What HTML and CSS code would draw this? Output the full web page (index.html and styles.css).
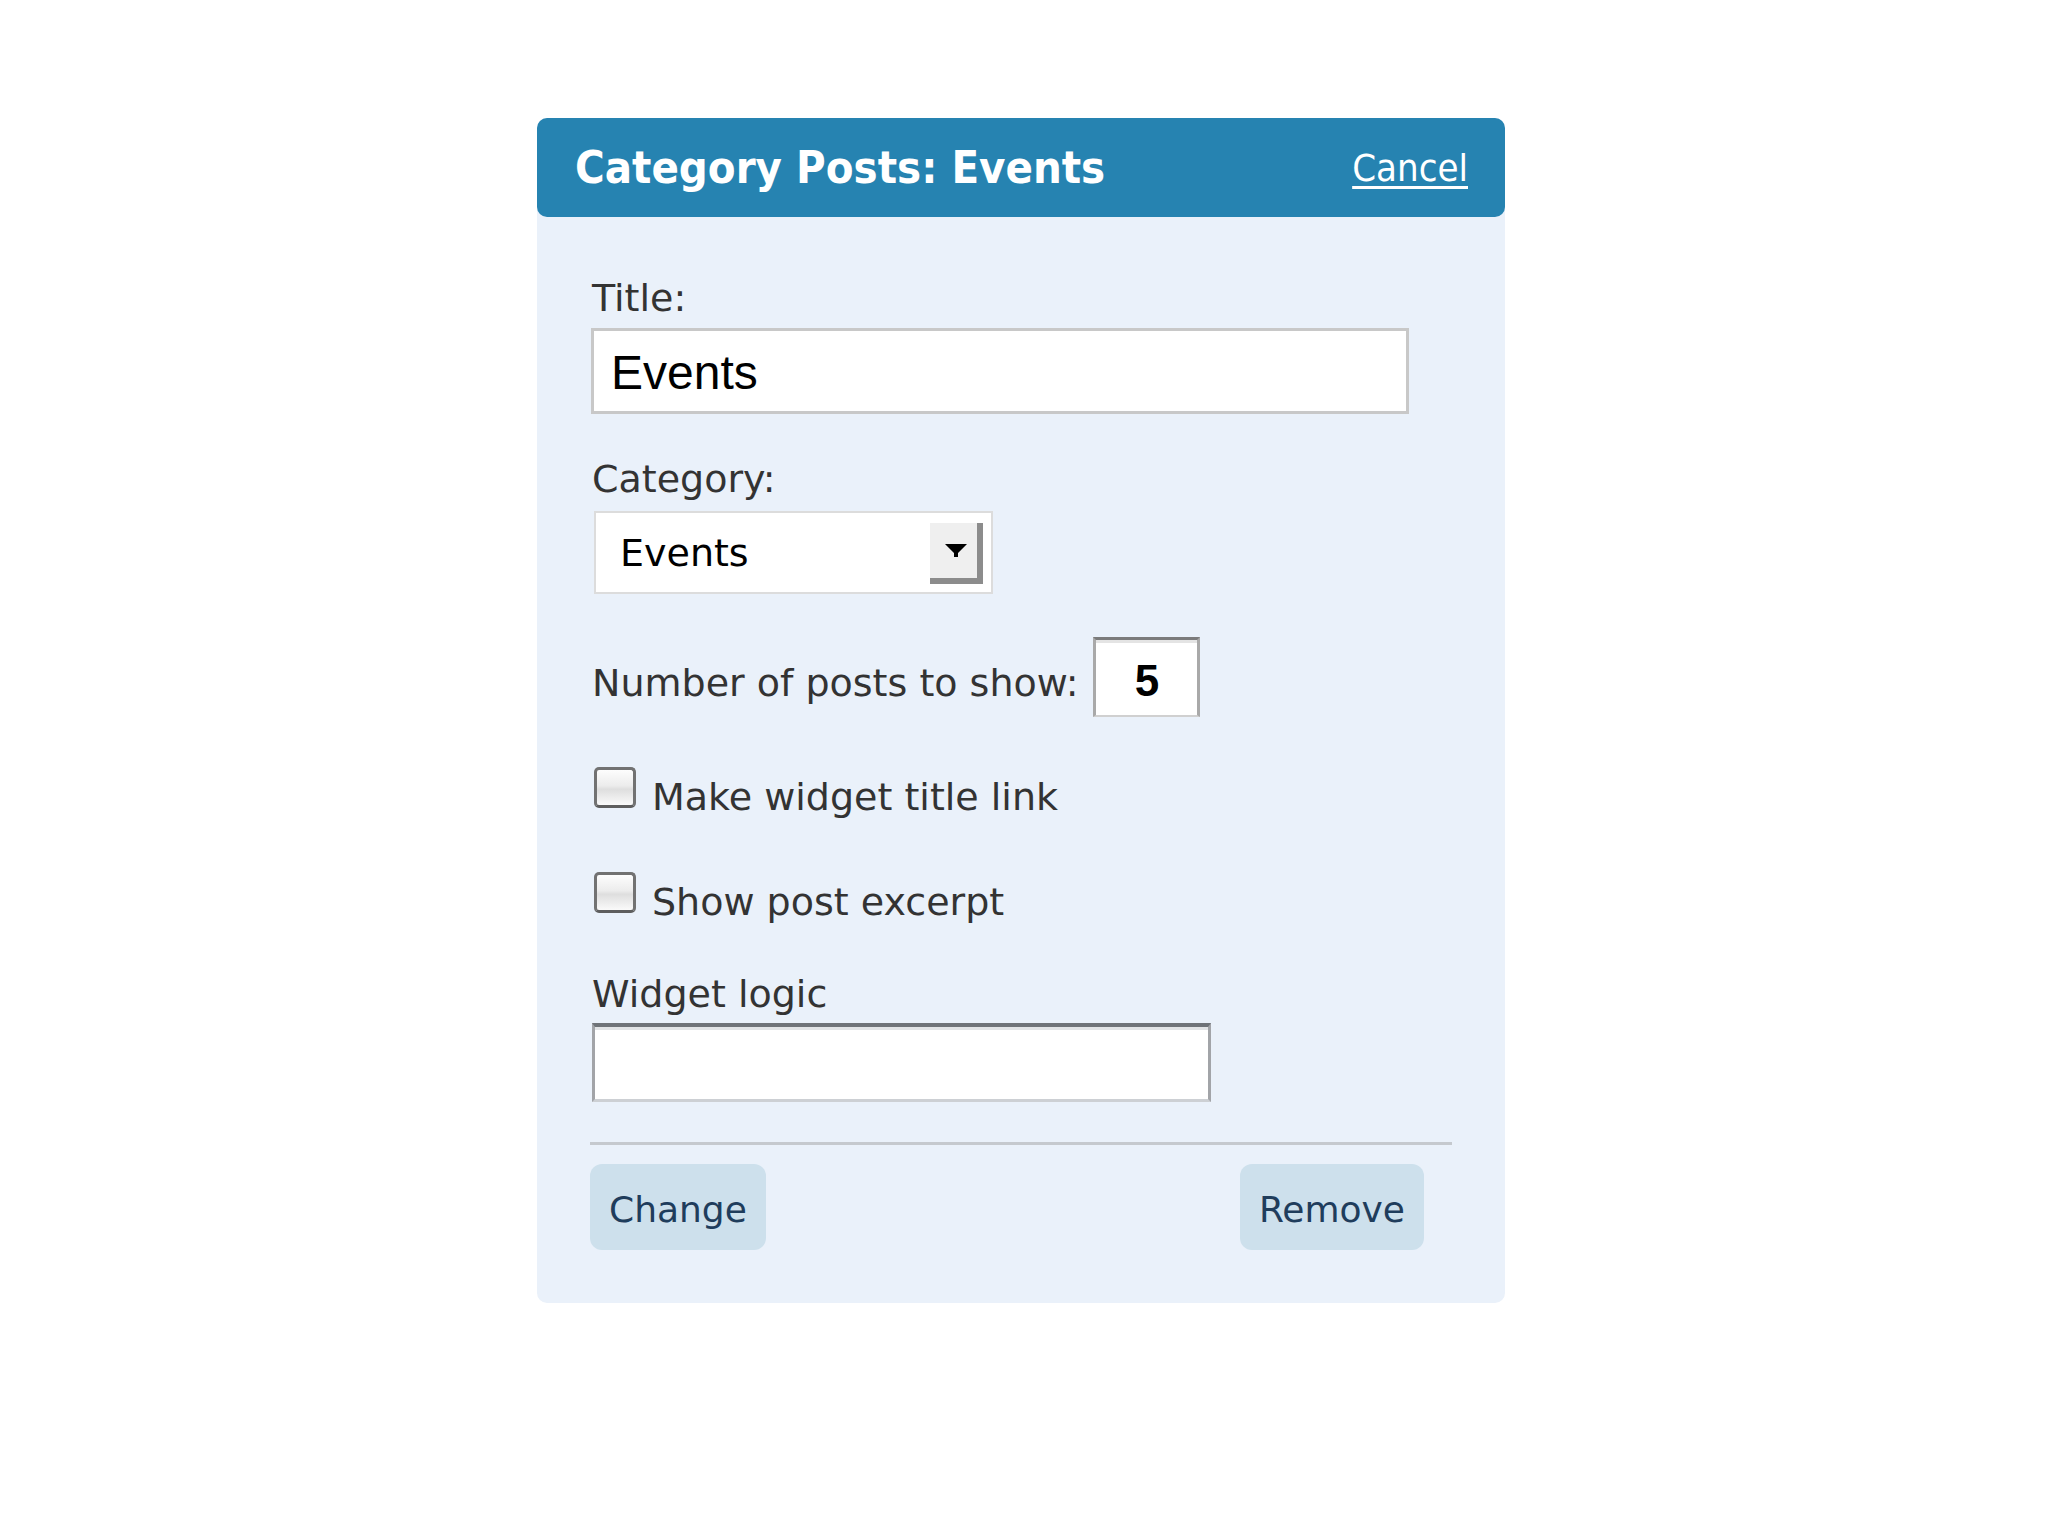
FILE: index.html
```html
<!DOCTYPE html>
<html lang="en">
<head>
<meta charset="utf-8">
<title>Category Posts: Events</title>
<link rel="stylesheet" href="styles.css">
</head>
<body>
<div class="widget">
  <div class="widget-top">
    <h3 class="widget-title">Category Posts: Events</h3>
    <a class="cancel" href="#">Cancel</a>
  </div>
  <div class="widget-inside">
    <label class="field-label lbl-title">Title:</label>
    <input class="title-input" type="text" value="Events">
    <label class="field-label lbl-cat">Category:</label>
    <div class="select">
      <span class="select-value">Events</span>
      <span class="select-btn"><svg width="22" height="13" viewBox="0 0 22 13"><path d="M0 0H22L13 9V13H9V9Z" fill="#000"/></svg></span>
    </div>
    <div class="num-row">
      <label class="field-label num-label">Number of posts to show:</label>
      <input class="num-input" type="text" value="5">
    </div>
    <label class="check-row row1"><input type="checkbox" class="check"><span class="check-text">Make widget title link</span></label>
    <label class="check-row row2"><input type="checkbox" class="check"><span class="check-text">Show post excerpt</span></label>
    <label class="field-label lbl-logic">Widget logic</label>
    <input class="logic-input" type="text" value="">
    <div class="divider"></div>
    <div class="actions">
      <button class="btn" type="button">Change</button>
      <button class="btn" type="button">Remove</button>
    </div>
  </div>
</div>
</body>
</html>
```

FILE: styles.css
```css
html, body {
  margin: 0;
  padding: 0;
  background: #ffffff;
}

body {
  font-family: "DejaVu Sans", "Liberation Sans", sans-serif;
  color: #333333;
}

.widget {
  width: 968px;
  margin: 118px 0 0 537px;
  background: #eaf1fa;
  border-radius: 10px;
}

.widget-top {
  box-sizing: border-box;
  height: 99px;
  padding: 0 37px 0 38px;
  display: flex;
  justify-content: space-between;
  align-items: center;
  background: #2683b1;
  border-radius: 10px;
}

.widget-title {
  margin: 0;
  font-family: "DejaVu Sans Condensed", "DejaVu Sans", sans-serif;
  font-stretch: condensed;
  font-weight: bold;
  font-size: 45px;
  color: #ffffff;
}

.cancel {
  font-family: "DejaVu Sans Condensed", "DejaVu Sans", sans-serif;
  font-stretch: condensed;
  font-size: 38px;
  color: #ffffff;
  text-decoration: underline;
  text-decoration-thickness: 3px;
  text-underline-offset: 5px;
}

.widget-inside {
  padding: 0 53px 53px 55px;
}

.field-label {
  display: block;
  font-size: 38px;
  line-height: 46px;
  color: #333333;
}

.lbl-title { margin-top: 58px; }

.title-input {
  display: block;
  box-sizing: border-box;
  margin: 7px 0 0 -1px;
  width: 818px;
  height: 86px;
  padding: 2px 0 0 17px;
  border: 3px solid #c8c8c8;
  background: #ffffff;
  font-family: "Liberation Sans", sans-serif;
  font-size: 48px;
  color: #000000;
  outline: none;
}

.lbl-cat { margin-top: 42px; }

.select {
  box-sizing: border-box;
  margin: 9px 0 0 2px;
  width: 399px;
  height: 83px;
  padding: 0 8px 0 24px;
  border: 2px solid #dcdcdc;
  background: #ffffff;
  display: flex;
  justify-content: space-between;
  align-items: center;
}

.select-value {
  font-size: 38px;
  color: #000000;
}

.select-btn {
  box-sizing: border-box;
  width: 53px;
  height: 61px;
  margin-top: 2px;
  background: #efefef;
  border-right: 6px solid #8c8c8c;
  border-bottom: 6px solid #8c8c8c;
  display: flex;
  justify-content: center;
  align-items: center;
  padding-left: 4px;
}

.num-row {
  margin-top: 43px;
  display: flex;
  align-items: center;
  gap: 14px;
}

.num-label {
  margin-top: 12px;
}

.num-input {
  box-sizing: border-box;
  width: 107px;
  height: 80px;
  padding: 6px 0 0 2px;
  border-top: 3px solid #7b7b7b;
  border-left: 3px solid #a9a9a9;
  border-right: 3px solid #a9a9a9;
  border-bottom: 2px solid #d0d0d0;
  box-shadow: inset 0 3px 0 #e4e4e4;
  background: #ffffff;
  text-align: center;
  font-family: "Liberation Sans", sans-serif;
  font-weight: bold;
  font-size: 44px;
  color: #000000;
  outline: none;
}

.check-row {
  display: flex;
  align-items: flex-start;
  gap: 16px;
}

.row1 { margin-top: 50px; }
.row2 { margin-top: 52px; }

.check {
  appearance: none;
  -webkit-appearance: none;
  box-sizing: border-box;
  margin: 0 0 0 2px;
  width: 42px;
  height: 41px;
  border: 3px solid #727272;
  border-bottom-color: #5e5e5e;
  border-radius: 5px;
  background: linear-gradient(#fdfdfd 0%, #ececec 45%, #dedede 55%, #fafafa 100%);
}

.check-text {
  margin-top: 7px;
  font-size: 38px;
  line-height: 46px;
  color: #333333;
}

.lbl-logic { margin-top: 46px; }

.logic-input {
  display: block;
  box-sizing: border-box;
  margin-top: 6px;
  width: 619px;
  height: 79px;
  padding: 0 12px;
  border-top: 4px solid #6f7378;
  border-left: 3px solid #a2a4a8;
  border-right: 3px solid #a2a4a8;
  border-bottom: 3px solid #cdd0d4;
  box-shadow: inset 0 3px 0 #e2e4e6;
  background: #ffffff;
  font-size: 38px;
  outline: none;
}

.divider {
  margin: 40px 0 0 -2px;
  height: 3px;
  background: #c5c9ce;
}

.actions {
  margin: 19px 0 0 -2px;
  padding-right: 28px;
  display: flex;
  justify-content: space-between;
}

.btn {
  height: 86px;
  padding: 4px 19px 0;
  border: 0;
  border-radius: 12px;
  background: #cde0ec;
  font-family: "DejaVu Sans", sans-serif;
  font-size: 36px;
  color: #1f3d5c;
}
```
